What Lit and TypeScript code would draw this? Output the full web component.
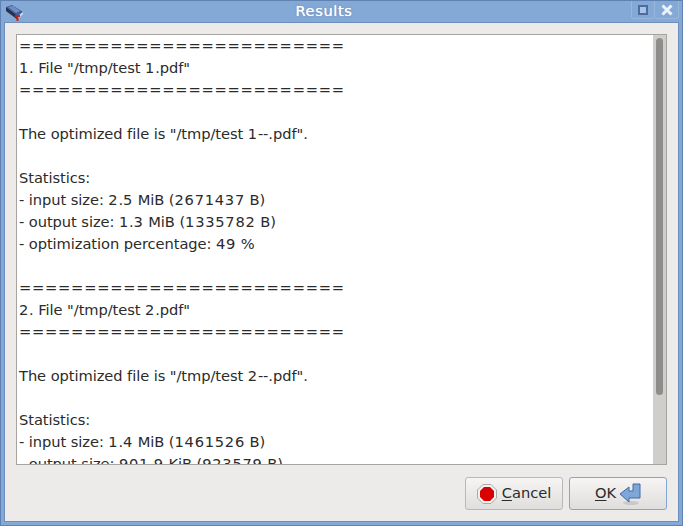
import { LitElement, html, css } from "lit";
import { customElement } from "lit/decorators.js";

const report = [
  "=========================",
  '1. File "/tmp/test 1.pdf"',
  "=========================",
  "",
  'The optimized file is "/tmp/test 1--.pdf".',
  "",
  "Statistics:",
  "- input size: 2.5 MiB (2671437 B)",
  "- output size: 1.3 MiB (1335782 B)",
  "- optimization percentage: 49 %",
  "",
  "=========================",
  '2. File "/tmp/test 2.pdf"',
  "=========================",
  "",
  'The optimized file is "/tmp/test 2--.pdf".',
  "",
  "Statistics:",
  "- input size: 1.4 MiB (1461526 B)",
  "- output size: 901.9 KiB (923579 B)",
];

// digits and = came out wider than the rest in the original font hinting
const spaced = (line: string) =>
  line
    .split(/([0-9=]+)/)
    .map((part, i) => (i % 2 ? html`<span class="wide">${part}</span>` : part));

@customElement("app-root")
export class AppRoot extends LitElement {
  static styles = css`
    :host {
      display: block;
      width: 683px;
      height: 526px;
      font-family: "DejaVu Sans", sans-serif;
      font-size: 14.67px;
      color: #2b2b2b;
    }
    .window {
      box-sizing: border-box;
      width: 683px;
      height: 526px;
      display: flex;
      flex-direction: column;
      background: #84a9d6;
      border: 1px solid #5f82b2;
      padding: 0 3px 3px;
    }
    .titlebar {
      height: 21px;
      flex: none;
      display: flex;
      align-items: center;
    }
    .app-icon {
      flex: none;
    }
    .title {
      flex: 1;
      text-align: center;
      padding: 0 7px 2px 0;
      color: #fff;
      font-size: 14.67px;
      letter-spacing: 0.6px;
      text-shadow: 0 0 1px #fff, 0 0 2px #47689a;
    }
    .win-buttons {
      display: flex;
      align-self: flex-start;
    }
    .win-button {
      width: 24px;
      height: 18px;
      display: flex;
      align-items: center;
      justify-content: center;
      border: 1px solid #97b7dd;
      border-top: none;
      border-radius: 0 0 3px 3px;
      box-sizing: border-box;
    }
    .win-button + .win-button {
      border-left: none;
    }
    .body {
      flex: 1;
      min-height: 0;
      display: flex;
      flex-direction: column;
      background: #ecebe9;
      padding: 11px;
      border: 1px solid #6e8fbd;
      box-sizing: border-box;
    }
    .frame {
      height: 431px;
      flex: none;
      box-sizing: border-box;
      display: flex;
      border: 1px solid #a5a4a1;
      background: #fff;
      overflow: hidden;
    }
    .text {
      flex: 1;
      min-width: 0;
      overflow: hidden;
      padding-left: 2px;
    }
    .line {
      height: 22px;
      line-height: 22px;
      white-space: pre;
      letter-spacing: -0.07px;
    }
    .wide {
      letter-spacing: 0.75px;
    }
    .scrollbar {
      width: 13px;
      flex: none;
      box-sizing: border-box;
      padding: 3px 3px 0;
      background: #cfcecb;
    }
    .thumb {
      height: 357px;
      background: #8e8d8b;
      border-radius: 4px;
    }
    .actions {
      display: flex;
      justify-content: flex-end;
      gap: 6px;
      margin-top: 12px;
    }
    .button {
      box-sizing: border-box;
      width: 98px;
      height: 33px;
      display: flex;
      align-items: center;
      justify-content: center;
      border: 1px solid #b9b8b5;
      border-radius: 3px;
      background: linear-gradient(#f6f5f4, #dfdedc);
      color: #2b2b2b;
      font: inherit;
      padding: 0;
    }
    .button span {
      padding-bottom: 2px;
    }
    .cancel {
      gap: 5px;
    }
    .ok {
      gap: 3px;
      border-color: #7fa6d4;
    }
    u {
      text-underline-offset: 2px;
    }
  `;

  render() {
    return html`
      <div class="window">
        <div class="titlebar">
          <svg class="app-icon" width="20" height="18" viewBox="0 0 20 18">
            <path d="M2 4 8 2l11 7-5 4z" fill="#3f5f9e" />
            <path d="M4 4l5-1 7 5-4 2z" fill="#6f8fc4" />
            <path d="M2 4l12 9v4L2 8z" fill="#27304c" />
            <path d="M14 13l5-4v2l-5 5z" fill="#d5dbe6" />
            <path d="M11 13h5M13.5 12v6" stroke="#c0271d" stroke-width="2" />
          </svg>
          <div class="title">Results</div>
          <div class="win-buttons">
            <div class="win-button">
              <svg width="10" height="10" viewBox="0 0 10 10">
                <rect x="1" y="1" width="8" height="8" fill="#a9c4e4" stroke="#4d6c9e" stroke-width="2" />
              </svg>
            </div>
            <div class="win-button">
              <svg width="12" height="12" viewBox="0 0 12 12">
                <path d="M1.5 1.5l9 9M10.5 1.5l-9 9" stroke="#eef3fa" stroke-width="3" />
              </svg>
            </div>
          </div>
        </div>
        <div class="body">
          <div class="frame">
            <div class="text">
              ${report.map((line) => html`<div class="line">${spaced(line)}</div>`)}
            </div>
            <div class="scrollbar"><div class="thumb"></div></div>
          </div>
          <div class="actions">
            <button class="button cancel">
              <svg width="20" height="20" viewBox="0 0 20 20">
                <path d="M6 .5h8L19.500 6v8L14 19.500H6L.5 14V6z" fill="#f2f2f0" stroke="#a8a8a6" />
                <path d="M7 3h6l4 4v6l-4 4H7l-4-4V7z" fill="#d80000" />
              </svg>
              <span><u>C</u>ancel</span>
            </button>
            <button class="button ok">
              <span><u>O</u>K</span>
              <svg width="22" height="22" viewBox="0 0 22 22">
                <ellipse cx="12" cy="20" rx="8" ry="2" fill="#c9c9c7" />
                <path d="M1 11l9-7v4h4V1h7v14H10v4z" fill="#7fa6d8" stroke="#3f6aa6" />
              </svg>
            </button>
          </div>
        </div>
      </div>
    `;
  }
}
